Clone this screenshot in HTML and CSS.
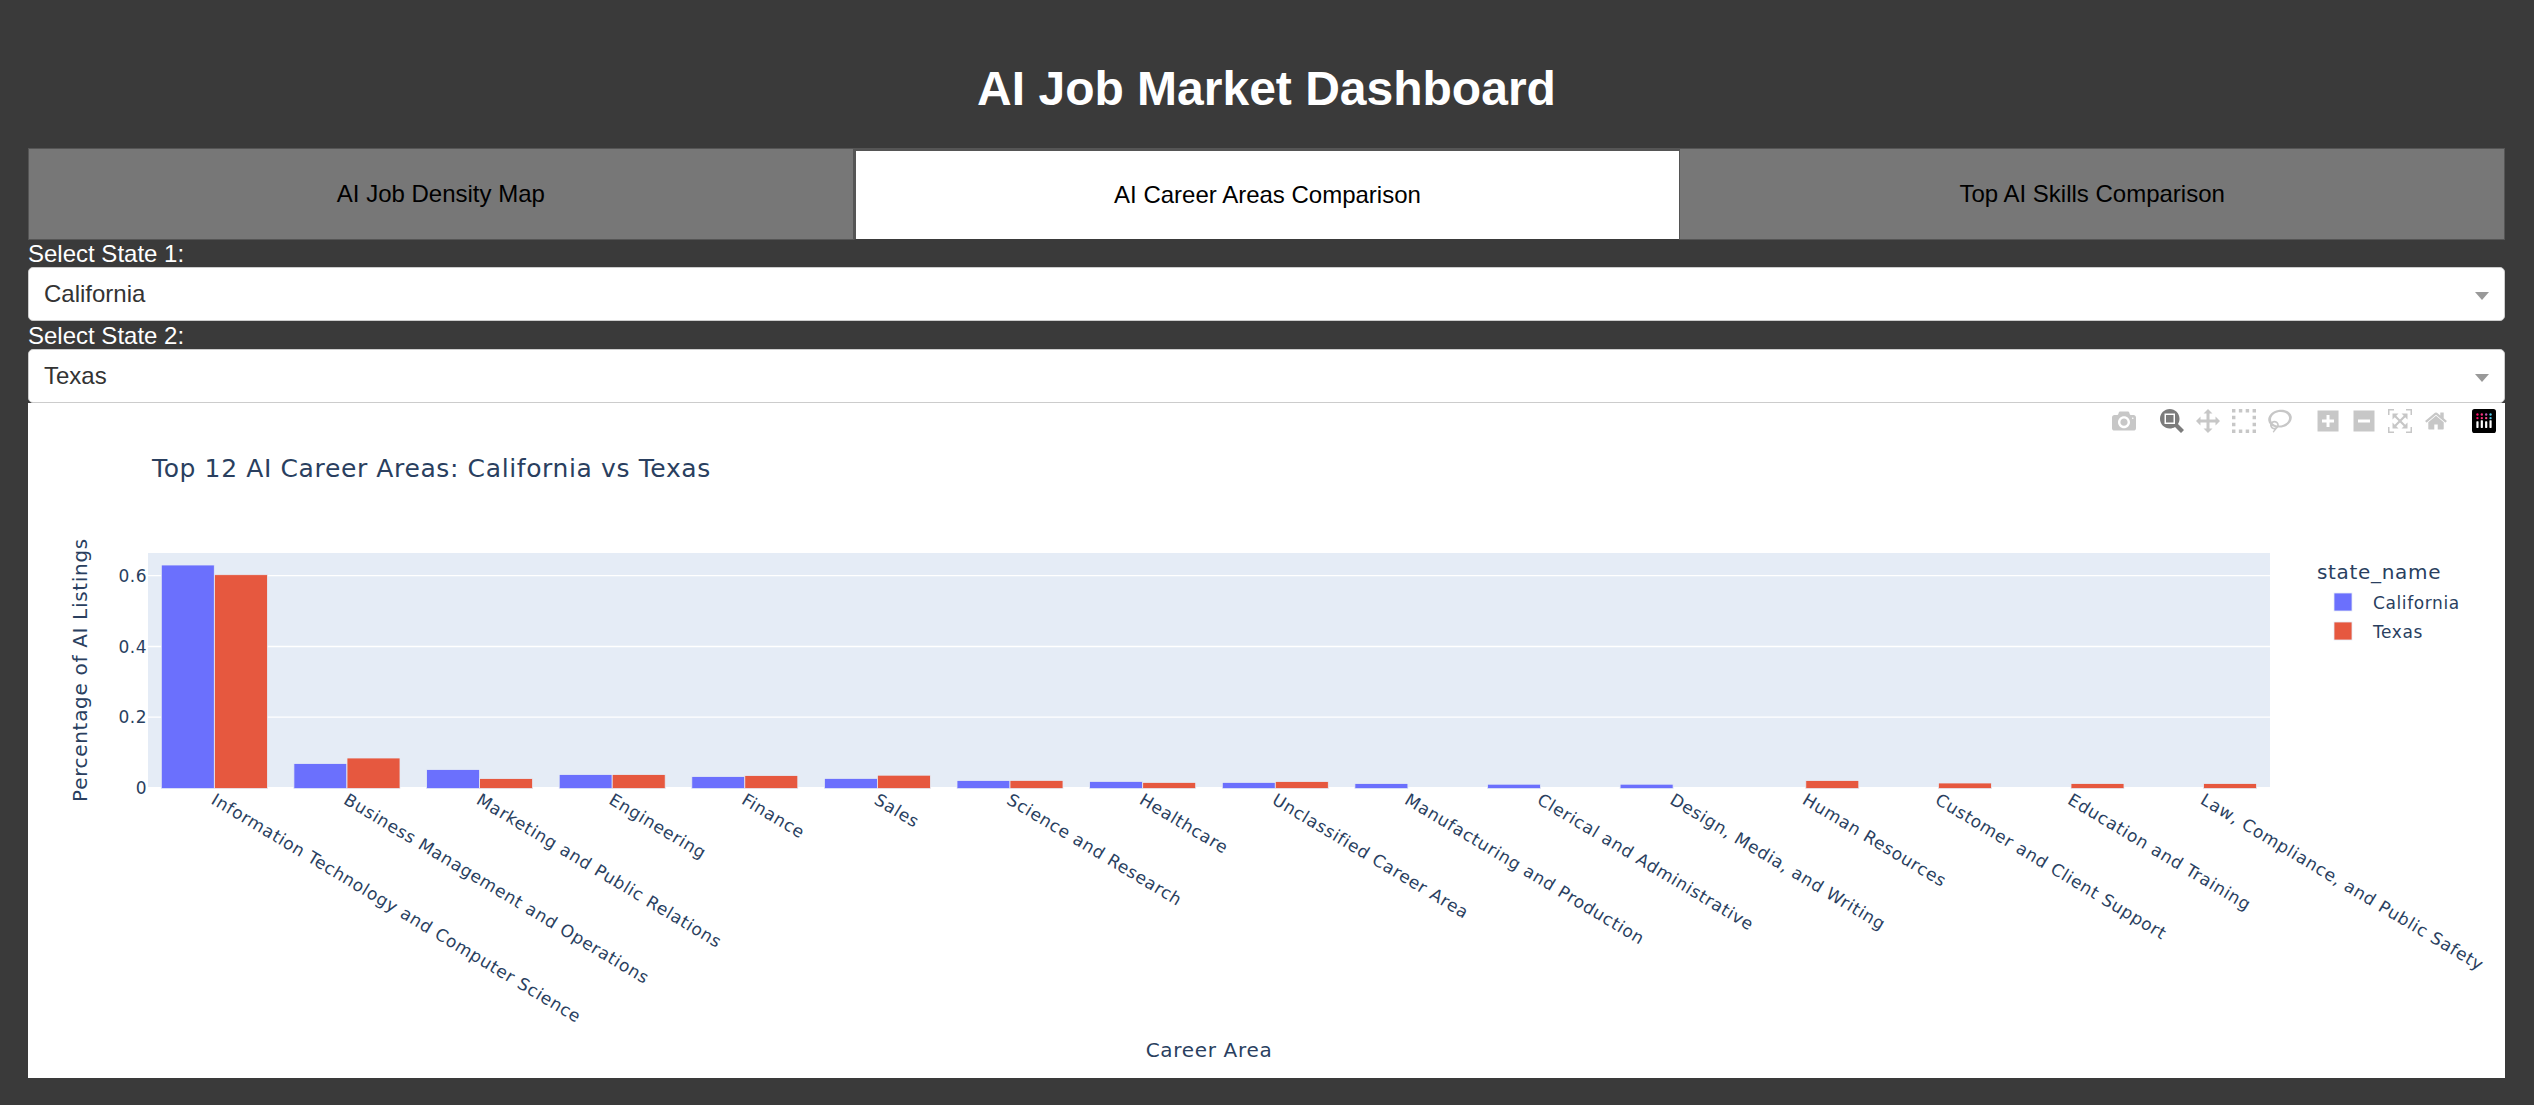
FILE: index.html
```html
<!DOCTYPE html>
<html lang="en">
<head>
<meta charset="utf-8">
<title>AI Job Market Dashboard</title>
<link rel="stylesheet" href="styles.css">
</head>
<body>
<main class="page">
  <h1 class="title">AI Job Market Dashboard</h1>
  <nav class="tabs">
    <div class="tab">AI Job Density Map</div>
    <div class="tab tab-active">AI Career Areas Comparison</div>
    <div class="tab">Top AI Skills Comparison</div>
  </nav>
  <label class="field-label">Select State 1:</label>
  <div class="dropdown"><span>California</span><i class="caret"></i></div>
  <label class="field-label">Select State 2:</label>
  <div class="dropdown"><span>Texas</span><i class="caret"></i></div>
  <section class="graph">
    <div class="modebar">
      <div class="mb-group">
        <svg class="mb-icon" viewBox="0 0 1000 1000"><path transform="matrix(1 0 0 -1 0 850)" d="m500 450c-83 0-150-67-150-150 0-83 67-150 150-150 83 0 150 67 150 150 0 83-67 150-150 150z m400 150h-120c-16 0-34 13-39 29l-31 93c-6 15-23 28-40 28h-340c-16 0-34-13-39-28l-31-93c-6-16-23-29-40-29h-120c-55 0-100-45-100-100v-450c0-55 45-100 100-100h800c55 0 100 45 100 100v450c0 55-45 100-100 100z m-400-550c-138 0-250 112-250 250 0 138 112 250 250 250 138 0 250-112 250-250 0-138-112-250-250-250z m365 380c-19 0-35 16-35 35 0 19 16 35 35 35 19 0 35-16 35-35 0-19-16-35-35-35z"/></svg>
      </div>
      <div class="mb-group">
        <svg class="mb-icon mb-on" viewBox="0 0 1000 1000"><path transform="matrix(1 0 0 -1 0 850)" d="m1000-25l-250 251c40 63 63 138 63 218 0 224-182 406-407 406-224 0-406-182-406-406s183-406 407-406c80 0 155 22 218 62l250-250 125 125z m-812 250l0 438 437 0 0-438-437 0z m62 375l313 0 0-312-313 0 0 312z"/></svg>
        <svg class="mb-icon" viewBox="0 0 1000 1000"><path transform="matrix(1 0 0 -1 0 850)" d="m1000 350l-187 188 0-125-250 0 0 250 125 0-188 187-187-187 125 0 0-250-250 0 0 125-188-188 186-187 0 125 252 0 0-250-125 0 187-188 188 188-125 0 0 250 250 0 0-126 187 188z"/></svg>
        <svg class="mb-icon" viewBox="0 0 1000 1000"><path transform="matrix(1 0 0 -1 0 850)" d="m0 850l0-143 143 0 0 143-143 0z m286 0l0-143 143 0 0 143-143 0z m285 0l0-143 143 0 0 143-143 0z m286 0l0-143 143 0 0 143-143 0z m-857-286l0-143 143 0 0 143-143 0z m857 0l0-143 143 0 0 143-143 0z m-857-285l0-143 143 0 0 143-143 0z m857 0l0-143 143 0 0 143-143 0z m-857-286l0-143 143 0 0 143-143 0z m286 0l0-143 143 0 0 143-143 0z m285 0l0-143 143 0 0 143-143 0z m286 0l0-143 143 0 0 143-143 0z"/></svg>
        <svg class="mb-icon" viewBox="0 0 1031 1000"><path transform="matrix(1 0 0 -1 0 850)" d="m1018 538c-36 207-290 336-568 286-277-48-473-256-436-463 10-57 36-108 76-151-13-66 11-137 68-183 34-28 75-41 114-42l-55-70 0 0c-2-1-3-2-4-3-10-14-8-34 5-45 14-11 34-8 45 4 1 1 2 3 2 5l0 0 113 140c16 11 31 24 45 40 4 3 6 7 8 11 48-3 100 0 151 9 278 48 473 255 436 462z m-624-379c-80 14-149 48-197 96 42 42 109 47 156 9 33-26 47-66 41-105z m-187-74c-19 16-33 37-39 60 50-32 109-55 174-68-42-25-95-24-135 8z m360 75c-34-7-69-9-102-8 8 62-16 128-68 170-73 59-175 54-244-5-9 20-16 40-20 61-28 159 121 317 333 354s407-60 434-217c28-159-121-318-333-355z"/></svg>
      </div>
      <div class="mb-group">
        <svg class="mb-icon" viewBox="0 0 875 1000"><path transform="matrix(1 0 0 -1 0 850)" d="m1 787l0-875 875 0 0 875-875 0z m687-500l-187 0 0-187-125 0 0 187-188 0 0 125 188 0 0 187 125 0 0-187 187 0 0-125z"/></svg>
        <svg class="mb-icon" viewBox="0 0 875 1000"><path transform="matrix(1 0 0 -1 0 850)" d="m0 788l0-876 875 0 0 876-875 0z m688-500l-500 0 0 125 500 0 0-125z"/></svg>
        <svg class="mb-icon" viewBox="0 0 1000 1000"><path transform="matrix(1 0 0 -1 0 850)" d="m250 850l-187 0-63 0 0-62 0-188 63 0 0 188 187 0 0 62z m688 0l-188 0 0-62 188 0 0-188 62 0 0 188 0 62-62 0z m-875-938l0 188-63 0 0-188 0-62 63 0 187 0 0 62-187 0z m875 188l0-188-188 0 0-62 188 0 62 0 0 62 0 188-62 0z m-125 188l-1 0-93-94-156 156 156 156 92-93 2 0 0 250-250 0 0-2 93-92-156-156-156 156 94 92 0 2-250 0 0-250 0 0 93 93 157-156-157-156-93 94 0 0 0-250 250 0 0 0-94 93 156 157 156-157-93-93 0 0 250 0 0 250z"/></svg>
        <svg class="mb-icon" viewBox="0 0 928.6 1000"><path transform="matrix(1 0 0 -1 0 850)" d="m786 296v-267q0-15-11-26t-25-10h-214v214h-143v-214h-214q-15 0-25 10t-11 26v267q0 1 0 2t0 2l321 264 321-264q1-1 1-4z m124 39l-34-41q-5-5-12-6h-2q-7 0-12 3l-386 322-386-322q-7-4-13-4-7 2-12 7l-35 41q-4 5-3 13t6 12l401 334q18 15 42 15t43-15l136-114v109q0 8 5 13t13 5h107q8 0 13-5t5-13v-227l122-102q5-5 6-12t-4-13z"/></svg>
      </div>
      <div class="mb-group">
        <svg class="mb-logo" viewBox="0 0 132 132">
          <rect width="132" height="132" rx="14" fill="#000"/>
          <circle cx="30" cy="30" r="6.5" fill="#ff0d68"/><circle cx="54" cy="30" r="6.5" fill="#ff2f7e"/><circle cx="78" cy="30" r="6.5" fill="#c45bb5"/><circle cx="102" cy="30" r="6.5" fill="#52c5e6"/>
          <circle cx="30" cy="50" r="6.5" fill="#ff0d68"/><circle cx="54" cy="50" r="6.5" fill="#ff2f7e"/><circle cx="78" cy="50" r="6.5" fill="#ff4f90"/><circle cx="102" cy="50" r="6.5" fill="#52c5e6"/>
          <rect x="24" y="68" width="12" height="36" rx="3" fill="#fff"/><rect x="48" y="62" width="12" height="42" rx="3" fill="#fff"/><rect x="72" y="68" width="12" height="36" rx="3" fill="#fff"/><rect x="96" y="62" width="12" height="42" rx="3" fill="#fff"/>
        </svg>
      </div>
    </div>
    <svg class="chart" viewBox="28 403 2477 675" width="2477" height="675">
      <text class="chart-title" x="152" y="477">Top 12 AI Career Areas: California vs Texas</text>
      <rect class="plot-bg" x="148" y="553" width="2122" height="234"/>
      <g class="grid">
        <line x1="148" x2="2270" y1="575.7" y2="575.7"/>
        <line x1="148" x2="2270" y1="646.5" y2="646.5"/>
        <line x1="148" x2="2270" y1="717.2" y2="717.2"/>
      </g>
      <g class="ticks-y">
        <text x="147" y="582">0.6</text>
        <text x="147" y="653">0.4</text>
        <text x="147" y="723">0.2</text>
        <text x="147" y="794">0</text>
      </g>
      <g class="bars blue">
        <rect x="161.3" y="565" width="53" height="223.6"/>
        <rect x="293.9" y="763.6" width="53" height="25"/>
        <rect x="426.6" y="769.6" width="53" height="19"/>
        <rect x="559.2" y="774.6" width="53" height="14"/>
        <rect x="691.8" y="776.6" width="53" height="12"/>
        <rect x="824.4" y="778.4" width="53" height="10.2"/>
        <rect x="957" y="780.6" width="53" height="8"/>
        <rect x="1089.6" y="781.4" width="53" height="7.2"/>
        <rect x="1222.3" y="782.4" width="53" height="6.2"/>
        <rect x="1354.9" y="783.6" width="53" height="5"/>
        <rect x="1487.5" y="784.2" width="53" height="4.4"/>
        <rect x="1620.1" y="784.2" width="53" height="4.4"/>
      </g>
      <g class="bars red">
        <rect x="214.4" y="574.7" width="53" height="213.9"/>
        <rect x="347" y="758" width="53" height="30.6"/>
        <rect x="479.6" y="778.6" width="53" height="10"/>
        <rect x="612.2" y="774.6" width="53" height="14"/>
        <rect x="744.8" y="775.6" width="53" height="13"/>
        <rect x="877.4" y="775.2" width="53" height="13.4"/>
        <rect x="1010" y="780.4" width="53" height="8.2"/>
        <rect x="1142.7" y="782.4" width="53" height="6.2"/>
        <rect x="1275.3" y="781.6" width="53" height="7"/>
        <rect x="1805.8" y="780.6" width="53" height="8"/>
        <rect x="1938.4" y="783" width="53" height="5.6"/>
        <rect x="2071" y="783.6" width="53" height="5"/>
        <rect x="2203.6" y="783.6" width="53" height="5"/>
      </g>
      <g class="ticks-x">
        <text transform="translate(210 803) rotate(31)">Information Technology and Computer Science</text>
        <text transform="translate(342.6 803) rotate(31)">Business Management and Operations</text>
        <text transform="translate(475.2 803) rotate(31)">Marketing and Public Relations</text>
        <text transform="translate(607.8 803) rotate(31)">Engineering</text>
        <text transform="translate(740.4 803) rotate(31)">Finance</text>
        <text transform="translate(873 803) rotate(31)">Sales</text>
        <text transform="translate(1005.6 803) rotate(31)">Science and Research</text>
        <text transform="translate(1138.3 803) rotate(31)">Healthcare</text>
        <text transform="translate(1270.9 803) rotate(31)">Unclassified Career Area</text>
        <text transform="translate(1403.5 803) rotate(31)">Manufacturing and Production</text>
        <text transform="translate(1536.1 803) rotate(31)">Clerical and Administrative</text>
        <text transform="translate(1668.7 803) rotate(31)">Design, Media, and Writing</text>
        <text transform="translate(1801.3 803) rotate(31)">Human Resources</text>
        <text transform="translate(1933.9 803) rotate(31)">Customer and Client Support</text>
        <text transform="translate(2066.6 803) rotate(31)">Education and Training</text>
        <text transform="translate(2199.2 803) rotate(31)">Law, Compliance, and Public Safety</text>
      </g>
      <text class="axis-title" transform="translate(87 670) rotate(-90)">Percentage of AI Listings</text>
      <text class="axis-title" x="1209" y="1057">Career Area</text>
      <text class="legend-title" x="2317" y="579">state_name</text>
      <rect class="swatch blue-fill" x="2334" y="593" width="18" height="18"/>
      <text class="legend-item" x="2373" y="609">California</text>
      <rect class="swatch red-fill" x="2334" y="622" width="18" height="18"/>
      <text class="legend-item" x="2373" y="638">Texas</text>
    </svg>
  </section>
</main>
</body>
</html>
```

FILE: styles.css
```css
* { box-sizing: border-box; }

html, body {
  margin: 0;
  padding: 0;
  background: #3a3a3a;
}

.page {
  height: 1105px;
  padding: 0 29px 0 28px;
  overflow: hidden;
  font-family: "Liberation Sans", Arial, sans-serif;
  color: #fff;
}

.title {
  margin: 0;
  padding-top: 61px;
  height: 148px;
  font-size: 48px;
  line-height: 55px;
  font-weight: 700;
  text-align: center;
  color: #fff;
}

.tabs {
  display: grid;
  grid-template-columns: repeat(3, 1fr);
  height: 92px;
}

.tab {
  display: flex;
  align-items: center;
  justify-content: center;
  background: #777;
  border: 1px solid #555;
  color: #000;
  font-size: 24px;
}

.tab-active {
  background: #fff;
  border: 0;
  border-top: 3px solid #555;
  border-left: 2px solid #555;
  border-bottom: 1px solid #3a3a3a;
}

.field-label {
  display: block;
  height: 27px;
  font-size: 24px;
  line-height: 27px;
  color: #fff;
}

.dropdown {
  display: flex;
  align-items: center;
  justify-content: space-between;
  height: 54px;
  padding: 0 15px 0 15px;
  background: #fff;
  border: 1px solid #ccc;
  border-radius: 5px;
  color: #333;
  font-size: 24px;
}

.dropdown + .field-label { margin-top: 1px; }

.caret {
  width: 0;
  height: 0;
  border-top: 8px solid #999;
  border-left: 7px solid transparent;
  border-right: 7px solid transparent;
  margin-top: 4px;
}

.graph {
  position: relative;
  height: 675px;
  background: #fff;
}

.modebar {
  position: absolute;
  top: 6px;
  right: 9px;
  display: flex;
  gap: 24px;
}

.mb-group {
  display: flex;
  gap: 12px;
}

.mb-icon {
  display: block;
  width: 24px;
  height: 24px;
  fill: #c7c7c7;
}

.mb-on { fill: #7c7c7c; }

.mb-logo {
  display: block;
  width: 24px;
  height: 24px;
}

.chart {
  display: block;
  font-family: "DejaVu Sans", Verdana, sans-serif;
  fill: #2a3f5f;
}

.chart-title {
  font-size: 25px;
  letter-spacing: 0.62px;
}

.plot-bg { fill: #e5ecf6; }

.grid line { stroke: #fff; stroke-width: 1.33; }

.ticks-y text {
  font-size: 17px;
  letter-spacing: 0.5px;
  text-anchor: end;
}

.bars rect, .swatch {
  stroke: #e5ecf6;
  stroke-width: 0.8;
}

.blue rect, .blue-fill { fill: #6b70fd; }
.red rect, .red-fill { fill: #e6583f; }

.ticks-x text {
  font-size: 17px;
  letter-spacing: 0.7px;
}

.axis-title {
  font-size: 20px;
  letter-spacing: 0.68px;
  text-anchor: middle;
}

.legend-title {
  font-size: 20px;
  letter-spacing: 0.68px;
}

.legend-item {
  font-size: 17px;
  letter-spacing: 0.6px;
}
```
